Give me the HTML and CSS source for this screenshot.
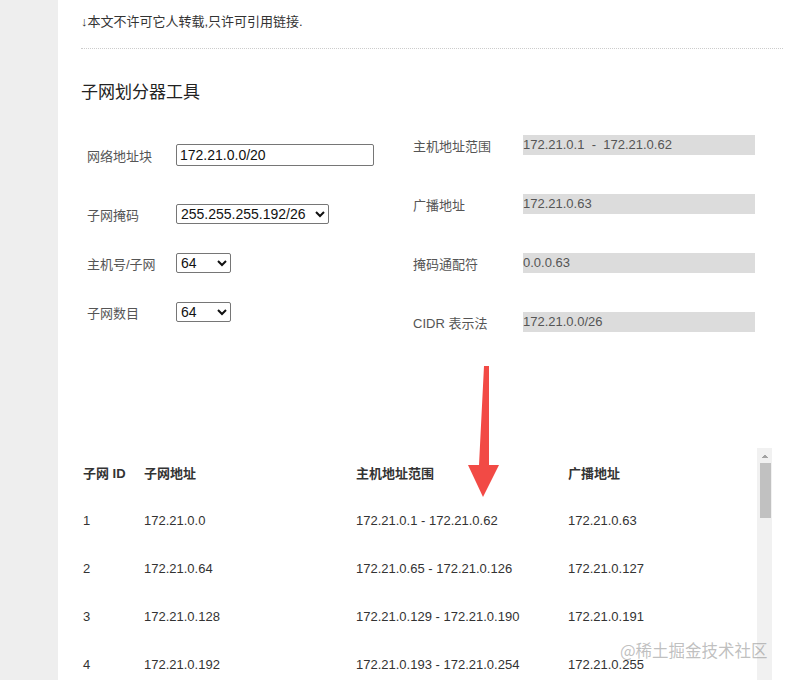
FILE: index.html
```html
<!DOCTYPE html>
<html lang="zh-CN">
<head>
  <meta charset="UTF-8" />
  <meta name="viewport" content="width=device-width, initial-scale=1.0"/>
  <title>子网划分器工具</title>
  <link rel="stylesheet" href="styles.css">
</head>
<body>
  <div class="sidebar"></div>
  <div class="main">
    <p class="notice">↓本文不许可它人转载,只许可引用链接.</p>

    <h3 class="title">子网划分器工具</h3>

    <div class="calc">
      <div class="calc-left">
        <div class="row row-first">
          <label>网络地址块</label>
          <input type="text" id="netInput" value="172.21.0.0/20">
        </div>
        <div class="row">
          <label>子网掩码</label>
          <select id="maskSelect">
            <option>255.255.255.192/26</option>
          </select>
        </div>
        <div class="row">
          <label>主机号/子网</label>
          <select class="small-select">
            <option>64</option>
            <option>128</option>
          </select>
        </div>
        <div class="row">
          <label>子网数目</label>
          <select class="small-select">
            <option>64</option>
            <option>32</option>
          </select>
        </div>
      </div>

      <div class="calc-right">
        <div class="row">
          <label>主机地址范围</label>
          <div class="value">172.21.0.1&nbsp; - &nbsp;172.21.0.62</div>
        </div>
        <div class="row">
          <label>广播地址</label>
          <div class="value">172.21.0.63</div>
        </div>
        <div class="row">
          <label>掩码通配符</label>
          <div class="value">0.0.0.63</div>
        </div>
        <div class="row">
          <label>CIDR 表示法</label>
          <div class="value">172.21.0.0/26</div>
        </div>
      </div>
    </div>

    <div class="table-container">
      <div class="table-scroll">
        <table>
          <colgroup>
            <col class="c-id">
            <col class="c-net">
            <col class="c-range">
            <col class="c-bc">
          </colgroup>
          <thead>
            <tr>
              <th>子网 ID</th>
              <th>子网地址</th>
              <th>主机地址范围</th>
              <th>广播地址</th>
            </tr>
          </thead>
          <tbody id="subnetList"></tbody>
        </table>
      </div>
      <div class="scrollbar">
        <div class="scroll-up"></div>
        <div class="scroll-thumb"></div>
      </div>
    </div>
  </div>

  <svg class="arrow" width="36" height="136" viewBox="0 0 36 136">
    <polygon points="18,2 23,2 23,101 33,101 17,133 2,101 13,101" fill="#f24a45"/>
  </svg>

  <div class="watermark">@稀土掘金技术社区</div>

  <script>
    function ip(n) {
      return "172.21." + Math.floor(n / 256) + "." + (n % 256);
    }

    const tbody = document.getElementById("subnetList");
    for (let i = 0; i < 64; i++) {
      const base = i * 64;
      const tr = document.createElement("tr");
      tr.innerHTML = `
        <td>${i + 1}</td>
        <td>${ip(base)}</td>
        <td>${ip(base + 1)} - ${ip(base + 62)}</td>
        <td>${ip(base + 63)}</td>
      `;
      tbody.appendChild(tr);
    }
  </script>
</body>
</html>
```

FILE: styles.css
```css
body {
  font-family: "Liberation Sans", Arial, "Noto Sans CJK SC", sans-serif;
  background-color: #fff;
  color: #333;
  margin: 0;
  padding: 0;
  display: flex;
}
.sidebar {
  width: 58px;
  min-height: 680px;
  background-color: #eeeeee;
  flex-shrink: 0;
}
.main {
  flex: 1;
  padding: 0 4px 0 23px;
}
.notice {
  margin: 12px 0 0;
  padding-bottom: 16px;
  font-size: 13px;
  line-height: 20px;
  border-bottom: 1px dotted #ccc;
}
.title {
  margin: 32px 0 0;
  font-size: 17px;
  line-height: 24px;
  font-weight: normal;
  color: #222;
}
.calc {
  display: flex;
  align-items: flex-start;
  height: 237px;
}
.calc label {
  font-size: 13px;
  color: #555;
  flex-shrink: 0;
}
.calc-left {
  width: 326px;
  padding: 26px 0 0 6px;
}
.calc-left .row {
  display: flex;
  align-items: center;
  height: 48px;
  margin-bottom: 1px;
}
.calc-left .row-first {
  margin-bottom: 11px;
}
.calc-left label {
  width: 89px;
}
.calc-left input {
  width: 198px;
  height: 22px;
  box-sizing: border-box;
  padding: 1px 3px;
  border: 1px solid #767676;
  border-radius: 2px;
  font-family: "Liberation Sans", Arial, sans-serif;
  font-size: 14px;
  color: #111;
}
.calc-left select {
  width: 153px;
  height: 20px;
  font-family: "Liberation Sans", Arial, sans-serif;
  font-size: 14px;
  color: #111;
  border: 1px solid #767676;
  border-radius: 2px;
  background-color: #fff;
}
.calc-left .small-select {
  width: 55px;
}
.calc-right {
  flex: 1;
  padding-top: 20px;
}
.calc-right .row {
  display: flex;
  align-items: center;
  height: 40px;
  margin-bottom: 19px;
}
.calc-right label {
  width: 110px;
}
.value {
  width: 232px;
  height: 20px;
  line-height: 20px;
  background-color: #dcdcdc;
  font-size: 13px;
  color: #555;
  white-space: nowrap;
}
.table-container {
  margin-top: 106px;
  width: 691px;
  height: 430px;
  display: flex;
}
.table-scroll {
  flex: 1;
  overflow: hidden;
}
.scrollbar {
  width: 15px;
  background-color: #f1f1f1;
  flex-shrink: 0;
}
.scroll-up {
  height: 15px;
  background: conic-gradient(from 135deg at 50% 0, #a3a3a3 90deg, transparent 0) no-repeat center / 8px 4px;
}
.scroll-thumb {
  height: 55px;
  margin: 0 1px 0 3px;
  background-color: #c1c1c1;
}
table {
  width: 676px;
  border-collapse: collapse;
  table-layout: fixed;
}
.c-id { width: 61px; }
.c-net { width: 212px; }
.c-range { width: 212px; }
.c-bc { width: 191px; }
th, td {
  height: 48px;
  padding: 0 0 0 2px;
  text-align: left;
  font-size: 13px;
  color: #333;
  white-space: nowrap;
}
th {
  font-weight: bold;
}
.arrow {
  position: absolute;
  left: 466px;
  top: 364px;
}
.watermark {
  position: absolute;
  left: 620px;
  top: 639px;
  font-size: 16.5px;
  line-height: 22px;
  color: rgba(150, 150, 150, 0.6);
  font-family: "Noto Sans CJK SC", sans-serif;
}
```
